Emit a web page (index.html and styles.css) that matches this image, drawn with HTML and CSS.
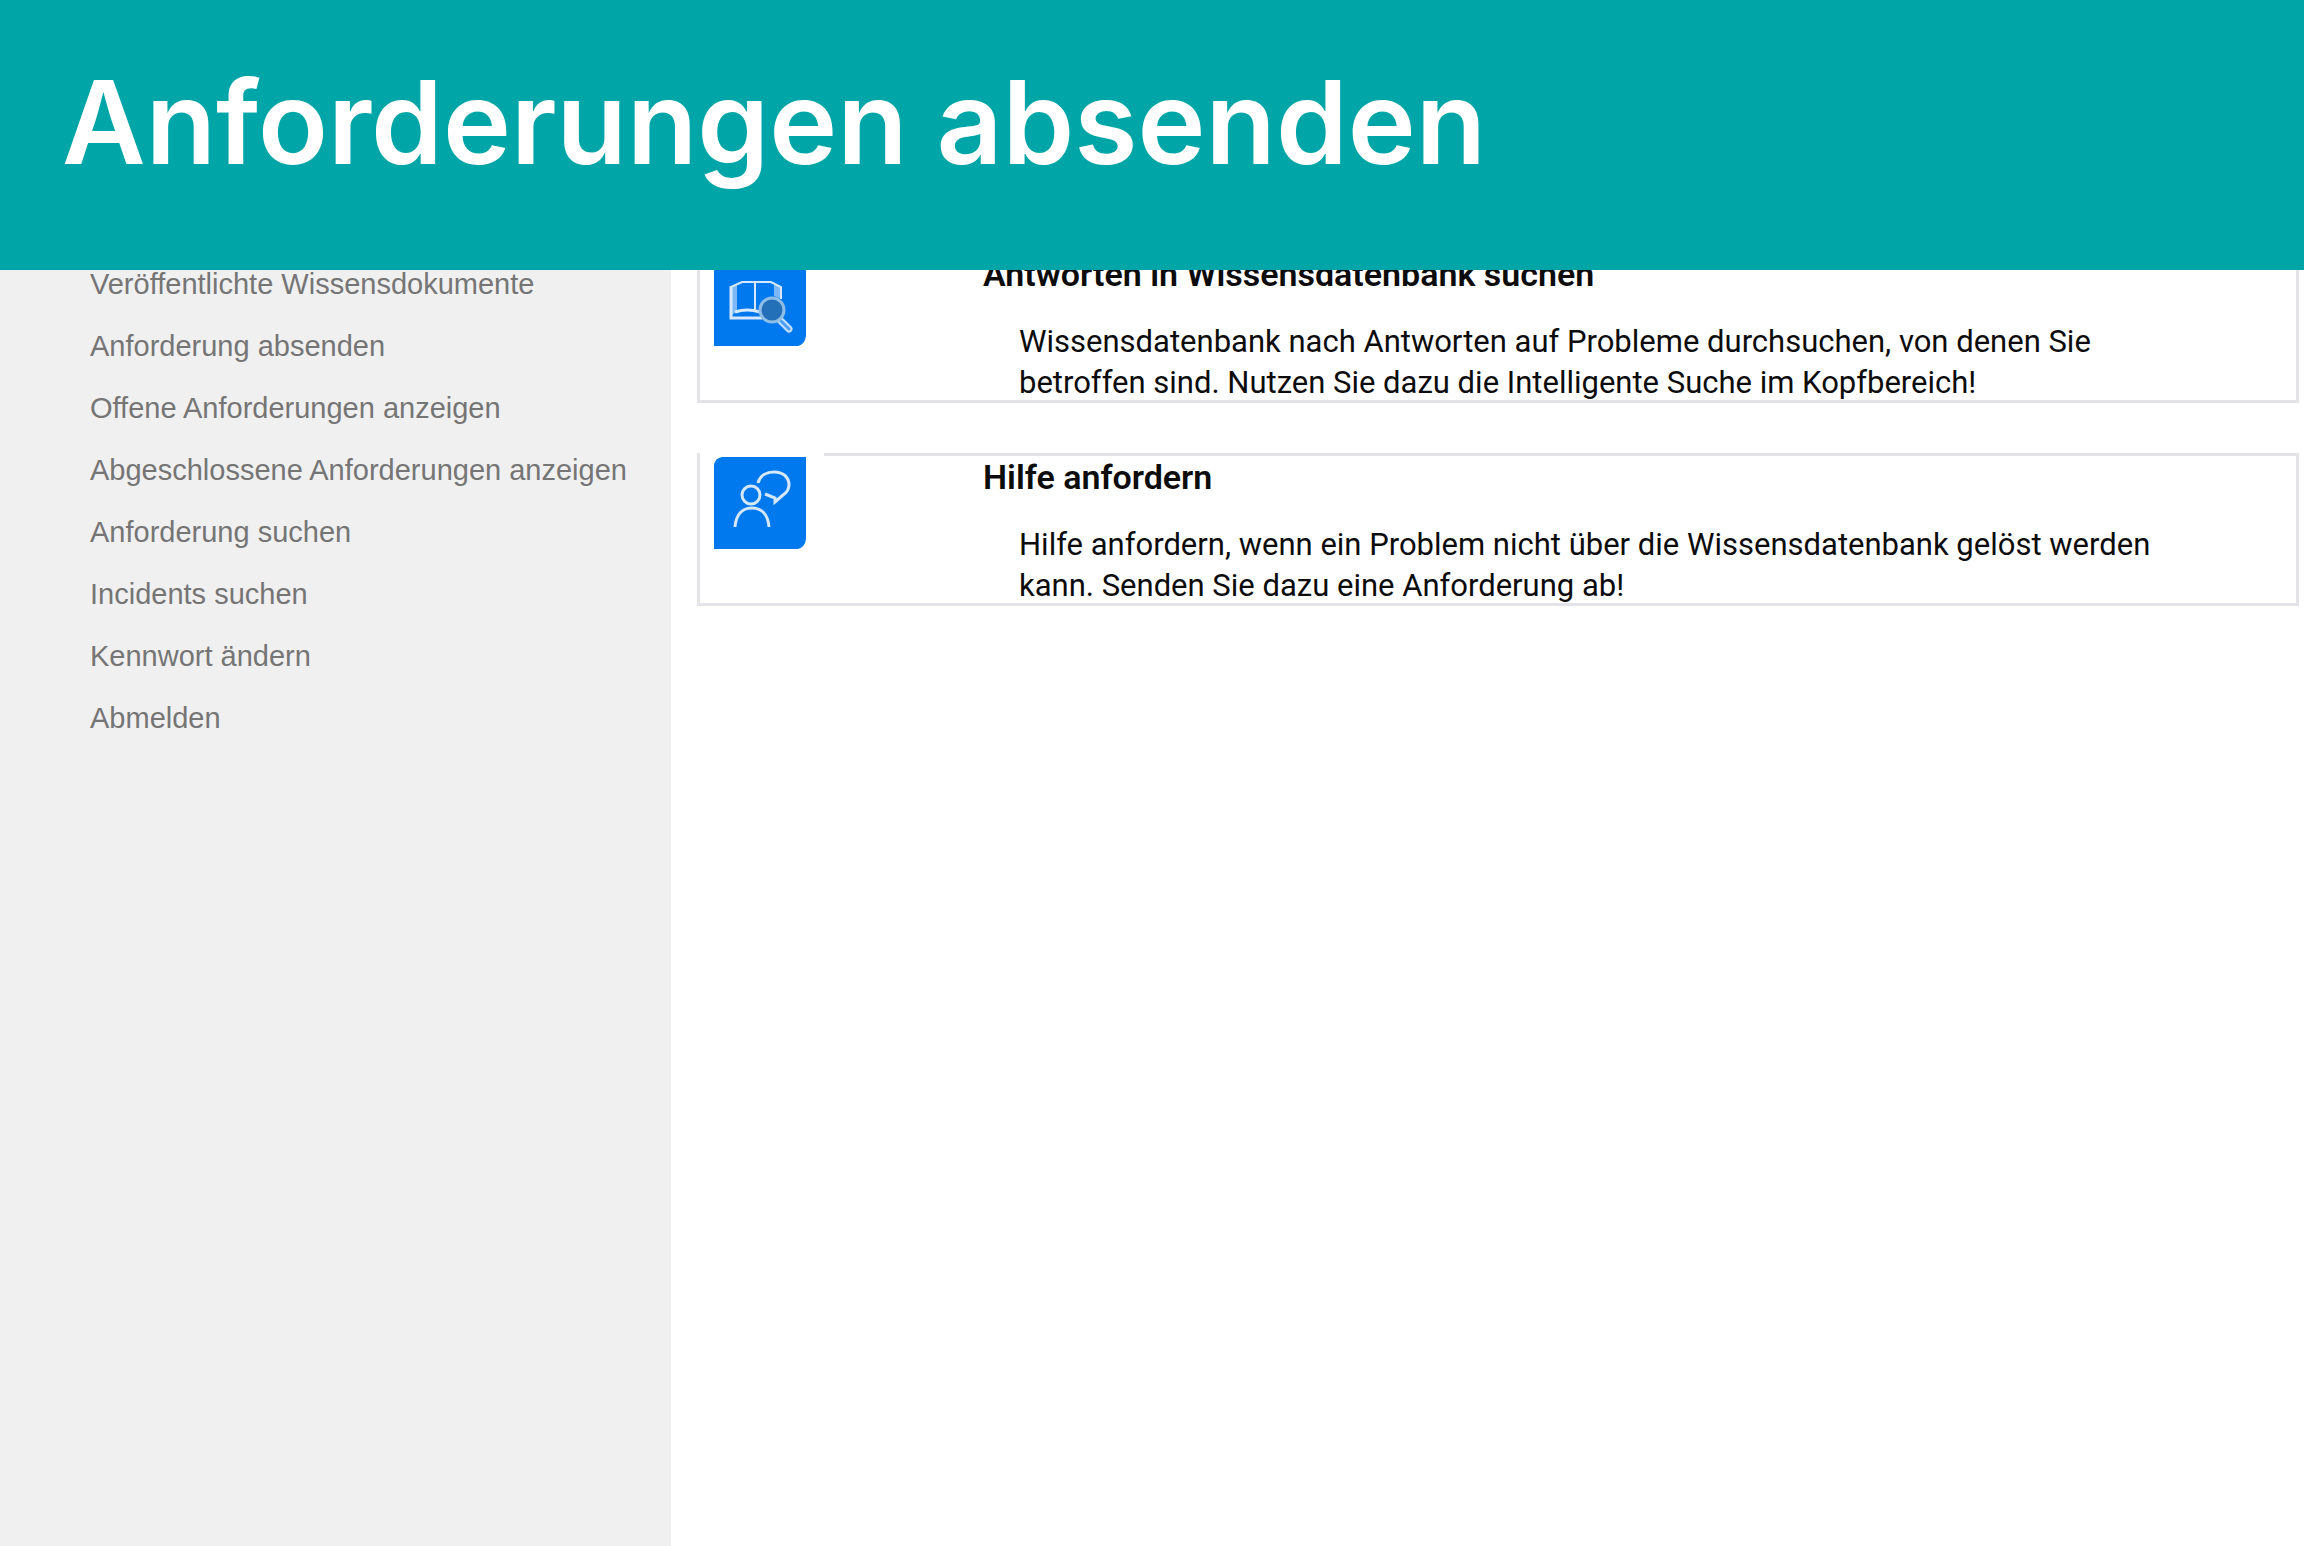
FILE: index.html
```html
<!DOCTYPE html>
<html lang="de">
<head>
  <meta charset="utf-8">
  <meta name="viewport" content="width=device-width, initial-scale=1">
  <title>Anforderungen absenden</title>
  <link rel="stylesheet" href="styles.css">
</head>
<body>
  <header class="banner">
    <h1 class="banner-title">Anforderungen absenden</h1>
  </header>
  <div class="layout">
    <nav class="sidebar" aria-label="Self-Service">
      <ul class="nav-list">
        <li><a href="#wissen">Veröffentlichte Wissensdokumente</a></li>
        <li><a href="#absenden">Anforderung absenden</a></li>
        <li><a href="#offen">Offene Anforderungen anzeigen</a></li>
        <li><a href="#abgeschlossen">Abgeschlossene Anforderungen anzeigen</a></li>
        <li><a href="#suchen">Anforderung suchen</a></li>
        <li><a href="#incidents">Incidents suchen</a></li>
        <li><a href="#kennwort">Kennwort ändern</a></li>
        <li><a href="#abmelden">Abmelden</a></li>
      </ul>
    </nav>
    <main class="content">
      <section class="card">
        <div class="card-icon">
          <svg class="tile" viewBox="0 0 92 92" aria-hidden="true">
            <path d="M8 0H92V82Q91 90 84 92H0V8Q1 1 8 0Z" fill="#0079ef"/>
            <path d="M17 33L23 31V57L17 62ZM60 29L67 33V45L60 42Z" fill="#7db8f7"/>
            <g fill="none" stroke="#d5e8fd" stroke-width="2">
              <path d="M17 33L28 28H57L67 33V45"/>
              <path d="M17 32V64H48" stroke-width="3"/>
              <path d="M41 29V57"/>
              <path d="M21 58Q33 54 46 58" stroke-width="3"/>
            </g>
            <path d="M66 66L75 75" stroke="#c3dffc" stroke-width="7" stroke-linecap="round"/>
            <path d="M67 67L75 75" stroke="#4b9ff4" stroke-width="3" stroke-linecap="round"/>
            <circle cx="58" cy="56" r="12" fill="#2470b8" stroke="#8fbde6" stroke-width="3"/>
          </svg>
        </div>
        <div class="card-body">
          <h2>Antworten in Wissensdatenbank suchen</h2>
          <p>Wissensdatenbank nach Antworten auf Probleme durchsuchen, von denen Sie betroffen sind. Nutzen Sie dazu die Intelligente Suche im Kopfbereich!</p>
        </div>
      </section>
      <section class="card">
        <div class="card-icon">
          <svg class="tile" viewBox="0 0 92 92" aria-hidden="true">
            <path d="M8 0H92V82Q91 90 84 92H0V8Q1 1 8 0Z" fill="#0079ef"/>
            <g fill="none" stroke="#d5e8fd" stroke-width="3">
              <circle cx="37" cy="38" r="9"/>
              <path d="M21 70C22 57 29 51 38 51C47 51 54 57 55 70"/>
              <path d="M44 26C46 18 53 15 60 15C69 15 75 20 75 28C75 33 72 36 69 38L61 45L61 41L51 37"/>
            </g>
          </svg>
        </div>
        <div class="card-body">
          <h2>Hilfe anfordern</h2>
          <p>Hilfe anfordern, wenn ein Problem nicht über die Wissensdatenbank gelöst werden kann. Senden Sie dazu eine Anforderung ab!</p>
        </div>
      </section>
    </main>
  </div>
</body>
</html>
```
FILE: styles.css
```css
* {
  box-sizing: border-box;
}

body {
  margin: 0;
  min-height: 100vh;
  display: flex;
  flex-direction: column;
  background: #fff;
  color: #0c0c0c;
  font-family: Roboto, sans-serif;
}

h1,
h2,
p,
ul {
  margin: 0;
  padding: 0;
}

.banner {
  position: sticky;
  top: 0;
  z-index: 1;
  padding: 43px 62px 67px;
  background: #00a6a7;
}

.banner-title {
  color: #fff;
  font: 600 115px/160px Inter, sans-serif;
}

/* The page content slides under the banner. */
.layout {
  flex: 1;
  display: flex;
  margin-top: -20px;
}

.sidebar {
  flex: none;
  width: 671px;
  padding: 3px 24px 24px 90px;
  background: #f0f0f0;
}

.nav-list {
  list-style: none;
  font: 29px/62px "Liberation Sans", sans-serif;
}

.nav-list a {
  color: #757575;
  text-decoration: none;
  white-space: nowrap;
}

.content {
  flex: 1;
  display: flex;
  flex-direction: column;
  gap: 50px;
  padding: 0 5px 24px 26px;
}

.card {
  display: flex;
  border: 3px solid #e4e4e8;
  border-top: 0;
}

.card-icon {
  flex: none;
  width: 124px;
  padding: 4px 14px 0;
}

.tile {
  display: block;
  width: 92px;
  height: 92px;
}

.card-body {
  flex: 1;
  padding: 0 96px 0 159px;
  border-top: 3px solid #e4e4e8;
}

.card-body h2 {
  font-size: 34px;
  font-weight: 600;
  line-height: 42px;
}

/* The last line sits tight on the card's bottom edge. */
.card-body p {
  margin-bottom: -3px;
  padding: 26px 0 0 36px;
  font-size: 31px;
  line-height: 41px;
}
```
